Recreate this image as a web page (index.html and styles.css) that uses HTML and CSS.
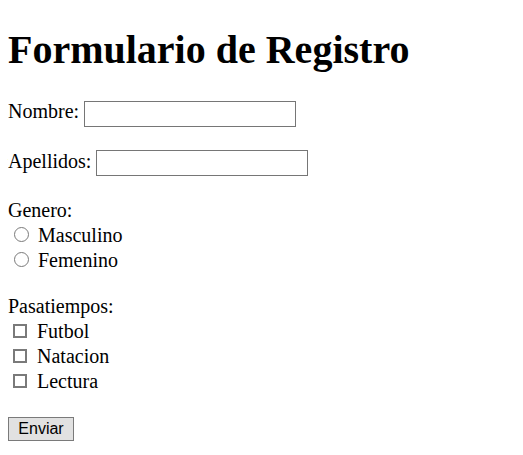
FILE: index.html
```html
<!DOCTYPE html>
<html lang="es">
<head>
<meta charset="utf-8">
<title>Formulario de Registro</title>
<link rel="stylesheet" href="styles.css">
</head>
<body>
<h1 class="title">Formulario de Registro</h1>
<form class="form">
<label for="nombre">Nombre:</label> <input class="text-input" type="text" id="nombre"><br><br>
<label for="apellidos">Apellidos:</label> <input class="text-input" type="text" id="apellidos"><br><br>
<label>Genero:</label><br>
<input class="radio" type="radio" name="genero" id="m"> <label for="m">Masculino</label><br>
<input class="radio" type="radio" name="genero" id="f"> <label for="f">Femenino</label><br><br>
<label>Pasatiempos:</label><br>
<input class="check" type="checkbox" id="c1"> <label for="c1">Futbol</label><br>
<input class="check" type="checkbox" id="c2"> <label for="c2">Natacion</label><br>
<input class="check" type="checkbox" id="c3"> <label for="c3">Lectura</label><br><br>
<input class="submit" type="submit" value="Enviar">
</form>
</body>
</html>
```
FILE: styles.css
```css
body {
  margin: 8px;
  font-family: "Liberation Serif", "Times New Roman", serif;
  font-size: 20px;
  color: #000;
  background: #fff;
}
.title {
  font-size: 40px;
  margin: 18px 0 27px;
}
.text-input {
  box-sizing: border-box;
  width: 212px;
  height: 26px;
  border: 1px solid #767676;
  padding: 0 2px;
  margin: 0;
  vertical-align: baseline;
}
.radio {
  -webkit-appearance: none;
  appearance: none;
  box-sizing: border-box;
  width: 15px;
  height: 15px;
  border: 1.5px solid #7a7a7a;
  border-radius: 50%;
  background: #fff;
  margin: 5px 4px 0 6px;
}
.check {
  -webkit-appearance: none;
  appearance: none;
  box-sizing: border-box;
  width: 14px;
  height: 14px;
  border: 2px solid #7a7a7a;
  border-radius: 0;
  background: #fff;
  margin: 6px 5px 0 5px;
}
.submit {
  box-sizing: border-box;
  height: 24px;
  width: 66px;
  font-family: "Liberation Sans", Arial, sans-serif;
  font-size: 16px;
  color: #000;
  background: #e1e1e1;
  border: 1px solid #7a7a7a;
  padding: 0 6px;
  margin: 0;
}
```
